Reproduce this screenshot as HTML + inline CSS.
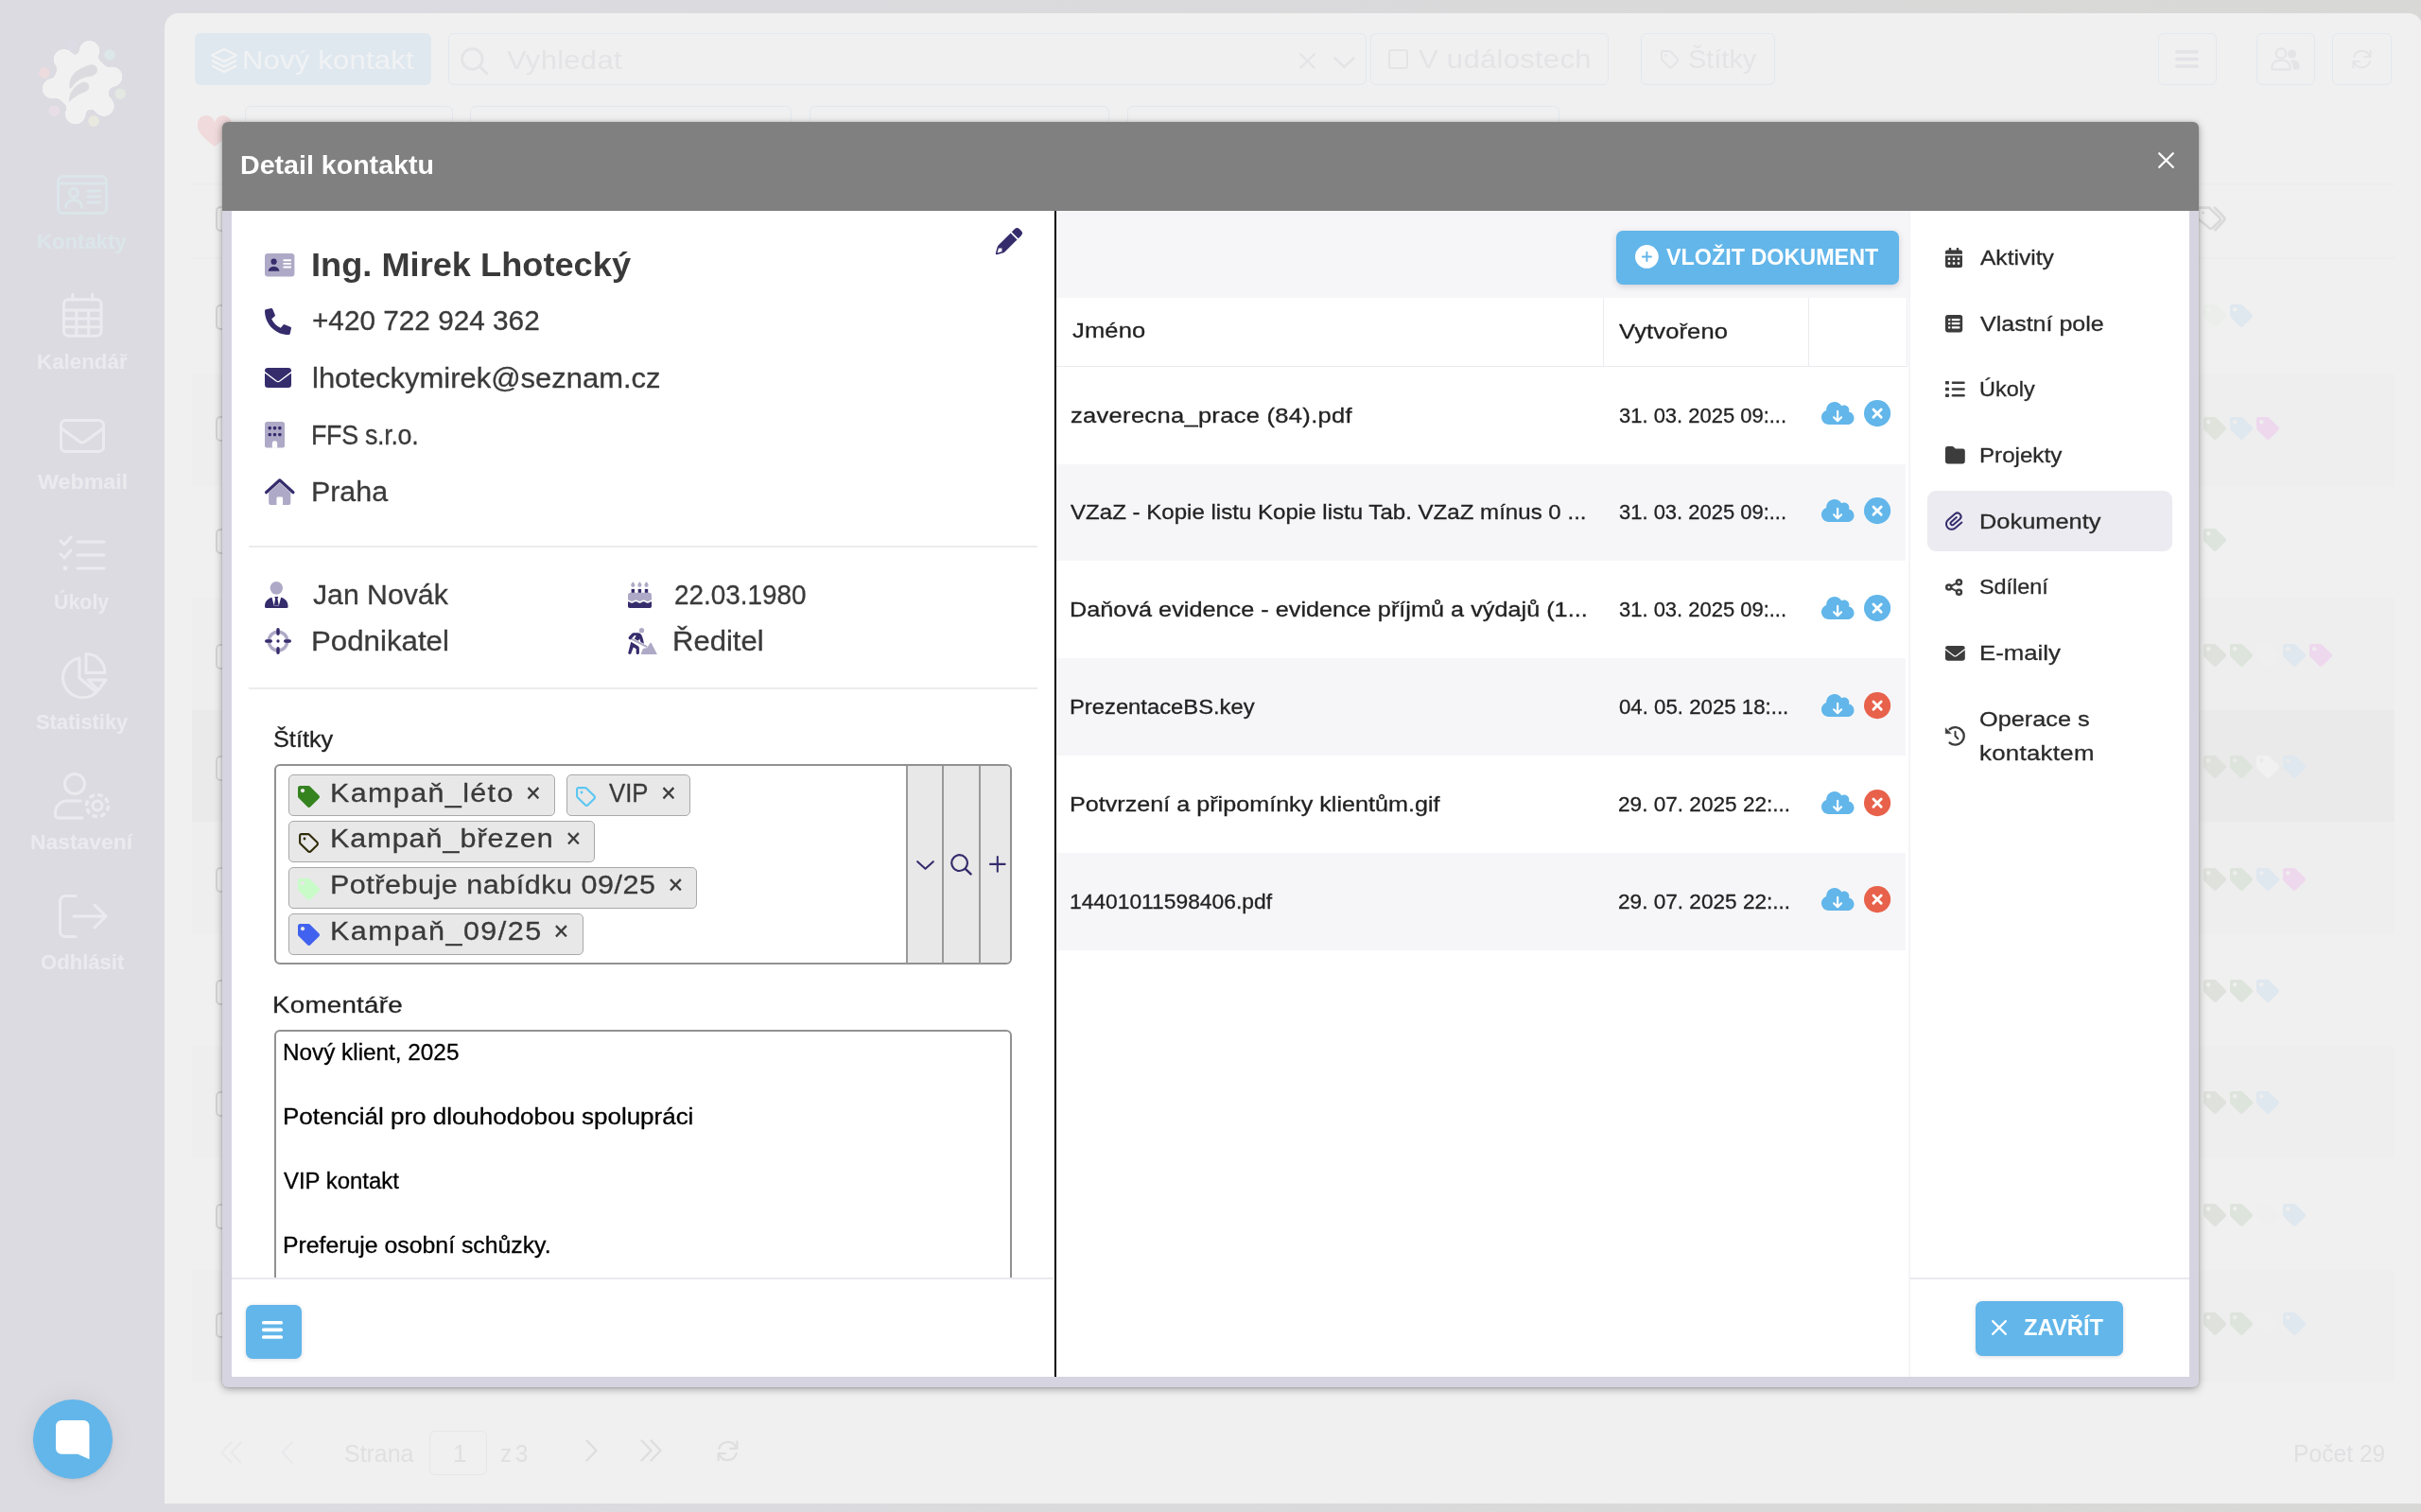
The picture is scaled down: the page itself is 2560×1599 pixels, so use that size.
<!DOCTYPE html>
<html lang="cs"><head><meta charset="utf-8"><title>Detail kontaktu</title>
<style>
html,body{margin:0;padding:0}
body{width:2560px;height:1599px;position:relative;overflow:hidden;background:linear-gradient(90deg,#dcdbe2 0%,#dcdbe2 8%,#dadadc 50%,#d8d8d6 100%);font-family:"Liberation Sans", sans-serif;color:#3a3a3a}
.b,.t,.i{position:absolute;box-sizing:border-box}
.t{white-space:pre;transform-origin:0 0}
.i{display:block;overflow:visible}
#w{position:absolute;left:0;top:0;width:2560px;height:1599px;will-change:transform}
</style></head>
<body>
<div id="w">
<!-- dimmed application behind the dialog -->
<div class="b" style="left:174px;top:14px;width:2387px;height:1576px;background:#f0f0f0;border-radius:15px 14px 0 0;"></div>
<div class="b" style="left:205.7px;top:34.7px;width:250.3px;height:55.5px;background:#e0e8ef;border-radius:6px;"></div>
<div class="b" style="left:473.8px;top:34.7px;width:971.2px;height:55.5px;border-radius:6px;border:1.5px solid #e3e8ee;"></div>
<div class="b" style="left:1449.3px;top:34.7px;width:251.3px;height:55.5px;border-radius:6px;border:1.5px solid #e3e8ee;"></div>
<div class="b" style="left:1735px;top:34.7px;width:141.8px;height:55.5px;border-radius:6px;border:1.5px solid #e3e8ee;"></div>
<div class="b" style="left:2281.6px;top:34.7px;width:62px;height:55.5px;border-radius:6px;border:1.5px solid #e3e8ee;"></div>
<div class="b" style="left:2385.8px;top:34.7px;width:62.5px;height:55.5px;border-radius:6px;border:1.5px solid #e3e8ee;"></div>
<div class="b" style="left:2466.2px;top:34.7px;width:62.5px;height:55.5px;border-radius:6px;border:1.5px solid #e3e8ee;"></div>
<div class="b" style="left:259px;top:111.5px;width:219.8px;height:40px;border-radius:6px 6px 0 0;border:1.5px solid #e3e8ee;"></div>
<div class="b" style="left:497px;top:111.5px;width:339.7px;height:40px;border-radius:6px 6px 0 0;border:1.5px solid #e3e8ee;"></div>
<div class="b" style="left:855.5px;top:111.5px;width:317.2px;height:40px;border-radius:6px 6px 0 0;border:1.5px solid #e3e8ee;"></div>
<div class="b" style="left:1192px;top:111.5px;width:456.5px;height:40px;border-radius:6px 6px 0 0;border:1.5px solid #e3e8ee;"></div>
<div class="b" style="left:1468.4px;top:52.2px;width:21px;height:21px;border-radius:3px;border:2px solid #e4e4e7;"></div>
<div class="b" style="left:453.5px;top:1512.8px;width:61.5px;height:46.8px;border-radius:6px;border:1.5px solid #e6e6e8;"></div>
<div class="b" style="left:34.7px;top:1480.4px;width:84px;height:84px;background:#62b6ea;border-radius:42px;box-shadow:0 0 22px 6px rgba(0,0,0,.045),0 2px 5px rgba(0,0,0,.10);"></div>
<div class="b" style="left:203px;top:395.4px;width:2329px;height:118.4px;background:#eeeeee;"></div>
<div class="b" style="left:203px;top:632.2px;width:2329px;height:118.4px;background:#eeeeee;"></div>
<div class="b" style="left:203px;top:869.0px;width:2329px;height:118.4px;background:#eeeeee;"></div>
<div class="b" style="left:203px;top:1105.8000000000002px;width:2329px;height:118.4px;background:#eeeeee;"></div>
<div class="b" style="left:203px;top:1342.6000000000001px;width:2329px;height:118.4px;background:#eeeeee;"></div>
<div class="b" style="left:203px;top:750.6px;width:2329px;height:118.4px;background:#eaeaea;"></div>
<div class="b" style="left:203px;top:194px;width:2329px;height:2px;background:#ededed;"></div>
<div class="b" style="left:203px;top:272px;width:2329px;height:2px;background:#ededed;"></div>
<div class="b" style="left:227.6px;top:218.0px;width:21px;height:27px;background:#f1f1f1;border-radius:5px;border:2px solid #d4d4d4;"></div>
<div class="b" style="left:227.6px;top:321.5px;width:21px;height:27px;background:#f1f1f1;border-radius:5px;border:2px solid #d4d4d4;"></div>
<div class="b" style="left:227.6px;top:440.0px;width:21px;height:27px;background:#f1f1f1;border-radius:5px;border:2px solid #d4d4d4;"></div>
<div class="b" style="left:227.6px;top:558.5px;width:21px;height:27px;background:#f1f1f1;border-radius:5px;border:2px solid #d4d4d4;"></div>
<div class="b" style="left:227.6px;top:680.5px;width:21px;height:27px;background:#f1f1f1;border-radius:5px;border:2px solid #d4d4d4;"></div>
<div class="b" style="left:227.6px;top:798.5px;width:21px;height:27px;background:#f1f1f1;border-radius:5px;border:2px solid #d4d4d4;"></div>
<div class="b" style="left:227.6px;top:917.0px;width:21px;height:27px;background:#f1f1f1;border-radius:5px;border:2px solid #d4d4d4;"></div>
<div class="b" style="left:227.6px;top:1035.5px;width:21px;height:27px;background:#f1f1f1;border-radius:5px;border:2px solid #d4d4d4;"></div>
<div class="b" style="left:227.6px;top:1153.5px;width:21px;height:27px;background:#f1f1f1;border-radius:5px;border:2px solid #d4d4d4;"></div>
<div class="b" style="left:227.6px;top:1272.5px;width:21px;height:27px;background:#f1f1f1;border-radius:5px;border:2px solid #d4d4d4;"></div>
<div class="b" style="left:227.6px;top:1387.5px;width:21px;height:27px;background:#f1f1f1;border-radius:5px;border:2px solid #d4d4d4;"></div>
<svg class="i" style="left:20px;top:20px;" width="140" height="140" viewBox="0 0 140 140" preserveAspectRatio="xMidYMid meet"><defs><filter id="goo" x="-10%" y="-10%" width="120%" height="120%" color-interpolation-filters="sRGB"><feGaussianBlur in="SourceGraphic" stdDeviation="2.6" result="b"/><feColorMatrix in="b" mode="matrix" values="1 0 0 0 0  0 1 0 0 0  0 0 1 0 0  0 0 0 16 -7"/></filter></defs><circle cx="55.1" cy="27.8" r="5.8" fill="#dddce5"/><circle cx="96.1" cy="38.0" r="5.8" fill="#dce7ea"/><circle cx="26.9" cy="56.9" r="5.8" fill="#ecdcde"/><circle cx="107.2" cy="79.2" r="5.8" fill="#e3e8e2"/><circle cx="37.3" cy="97.2" r="5.8" fill="#e8dfe6"/><circle cx="79.0" cy="108.1" r="5.8" fill="#e9e9df"/><g filter="url(#goo)"><circle cx="67.1" cy="67.1" r="29.6" fill="#f1f1f1"/><circle cx="74.5" cy="33.7" r="10.8" fill="#f1f1f1"/><circle cx="72.6" cy="42.5" r="10.2" fill="#f1f1f1"/><circle cx="98.6" cy="61.2" r="10.8" fill="#f1f1f1"/><circle cx="89.8" cy="62.9" r="10.2" fill="#f1f1f1"/><circle cx="89.9" cy="92.0" r="10.8" fill="#f1f1f1"/><circle cx="83.9" cy="85.4" r="10.2" fill="#f1f1f1"/><circle cx="59.7" cy="100.6" r="10.8" fill="#f1f1f1"/><circle cx="61.7" cy="91.8" r="10.2" fill="#f1f1f1"/><circle cx="35.6" cy="73.7" r="10.8" fill="#f1f1f1"/><circle cx="44.4" cy="71.9" r="10.2" fill="#f1f1f1"/><circle cx="47.5" cy="42.7" r="10.8" fill="#f1f1f1"/><circle cx="53.1" cy="49.7" r="10.2" fill="#f1f1f1"/></g><path d="M54.17 73.61C52.85 73.46 53.32 67.67 54.17 64.81C55.02 61.96 56.87 58.80 59.26 56.48C61.65 54.17 65.59 52.31 68.52 50.93C71.45 49.54 74.61 48.23 76.85 48.15C79.09 48.07 80.97 49.23 81.94 50.46C82.92 51.70 83.23 53.97 82.69 55.56C82.15 57.15 80.76 58.95 78.70 60.00C76.65 61.05 73.15 60.90 70.37 61.85C67.59 62.81 64.74 63.78 62.04 65.74C59.34 67.70 55.48 73.77 54.17 73.61z" fill="#dcdce0"/><path d="M52.96 87.50C52.50 86.65 53.43 81.40 54.63 78.70C55.83 76.00 57.95 73.27 60.19 71.30C62.42 69.32 65.90 67.31 68.06 66.85C70.22 66.39 72.15 67.47 73.15 68.52C74.15 69.57 74.46 71.79 74.07 73.15C73.69 74.51 72.53 75.59 70.83 76.67C69.14 77.75 66.13 78.44 63.89 79.63C61.65 80.82 59.23 82.48 57.41 83.80C55.59 85.11 53.43 88.35 52.96 87.50z" fill="#dcdce0"/></svg>
<svg class="i" style="left:60px;top:185px;" width="54" height="42" viewBox="0 0 54 42" preserveAspectRatio="xMidYMid meet"><rect x="1.500" y="1.500" width="51" height="39" rx="5" stroke="#dbe6ea" stroke-width="3" fill="none" stroke-linecap="round" stroke-linejoin="round"/><path d="M1.500 9H52.500" stroke="#dbe6ea" stroke-width="3" fill="none" stroke-linecap="round" stroke-linejoin="round"/><circle cx="18" cy="19" r="4.500" stroke="#dbe6ea" stroke-width="3" fill="none" stroke-linecap="round" stroke-linejoin="round"/><path d="M9.500 34a8.500 7.500 0 0 1 17 0M33 17H46M33 23H46M33 29H46" stroke="#dbe6ea" stroke-width="3" fill="none" stroke-linecap="round" stroke-linejoin="round"/></svg>
<svg class="i" style="left:66px;top:310px;" width="42.5" height="47" viewBox="0 0 43 47" preserveAspectRatio="xMidYMid meet"><rect x="1.500" y="6.500" width="40" height="39" rx="5" stroke="#ebebef" stroke-width="3" fill="none" stroke-linecap="round" stroke-linejoin="round"/><path d="M11 1V7M32 1V7M1.500 18H41.500M1.500 27H41.500M1.500 36H41.500M15 18V45M28 18V45" stroke="#ebebef" stroke-width="3" fill="none" stroke-linecap="round" stroke-linejoin="round"/></svg>
<svg class="i" style="left:63px;top:442.6px;" width="48" height="36" viewBox="0 0 48 36" preserveAspectRatio="xMidYMid meet"><rect x="1.500" y="1.500" width="45" height="33" rx="5" stroke="#ebebef" stroke-width="3" fill="none" stroke-linecap="round" stroke-linejoin="round"/><path d="M2 10L21 24a5 5 0 0 0 6 0L46 10" stroke="#ebebef" stroke-width="3" fill="none" stroke-linecap="round" stroke-linejoin="round"/></svg>
<svg class="i" style="left:62px;top:567px;" width="50" height="40" viewBox="0 0 50 40" preserveAspectRatio="xMidYMid meet"><path d="M2 5L6 9L13 1M2 19L6 23L13 15M20 6H48M20 20H48M20 34H48" stroke="#ebebef" stroke-width="3" fill="none" stroke-linecap="round" stroke-linejoin="round"/><circle cx="7" cy="34" r="2.400" fill="#ebebef"/></svg>
<svg class="i" style="left:62px;top:690px;" width="52" height="50" viewBox="0 0 52 50" preserveAspectRatio="xMidYMid meet"><path d="M22 6A21 21 0 1 0 40 42L22 27z" stroke="#ebebef" stroke-width="3" fill="none" stroke-linecap="round" stroke-linejoin="round"/><path d="M29 1.500A20 20 0 0 1 49 21.500H29z" stroke="#ebebef" stroke-width="3" fill="none" stroke-linecap="round" stroke-linejoin="round"/><path d="M31 29H50L42 40z" stroke="#ebebef" stroke-width="3" fill="none" stroke-linecap="round" stroke-linejoin="round"/></svg>
<svg class="i" style="left:57px;top:817px;" width="62" height="50" viewBox="0 0 62 50" preserveAspectRatio="xMidYMid meet"><circle cx="22" cy="12" r="10.500" stroke="#ebebef" stroke-width="3" fill="none" stroke-linecap="round" stroke-linejoin="round"/><path d="M28 30H14A12.500 12.500 0 0 0 1.500 42.500V45a3 3 0 0 0 3 3H30" stroke="#ebebef" stroke-width="3" fill="none" stroke-linecap="round" stroke-linejoin="round"/><circle cx="46" cy="35" r="5" stroke="#ebebef" stroke-width="3" fill="none" stroke-linecap="round" stroke-linejoin="round"/><circle cx="46" cy="35" r="11.500" stroke="#ebebef" stroke-width="3.400" stroke-dasharray="5.600 3.400" fill="none"/></svg>
<svg class="i" style="left:62px;top:946px;" width="52" height="46" viewBox="0 0 52 46" preserveAspectRatio="xMidYMid meet"><path d="M18 1.500H7A5.500 5.500 0 0 0 1.500 7V39A5.500 5.500 0 0 0 7 44.500H18M16 23H50M38 11L50 23L38 35" stroke="#ebebef" stroke-width="3" fill="none" stroke-linecap="round" stroke-linejoin="round"/></svg>
<svg class="i" style="left:58.7px;top:1501.5px;" width="35.5" height="41.8" viewBox="0 0 36 42" preserveAspectRatio="none"><path d="M6 0H30a6 6 0 0 1 6 6V41.500L23.500 36H6a6 6 0 0 1-6-6V6a6 6 0 0 1 6-6z" fill="#ffffff"/></svg>
<svg class="i" style="left:208.7px;top:124px;" width="36" height="31" viewBox="0 0 36 31" preserveAspectRatio="xMidYMid meet"><path d="M18 31C5 21 0 15 0 9A9 9 0 0 1 18 5.500A9 9 0 0 1 36 9C36 15 31 21 18 31z" fill="#f0dadb"/></svg>
<svg class="i" style="left:487px;top:50px;" width="29" height="29" viewBox="0 0 22.6 22.4" preserveAspectRatio="xMidYMid meet"><circle cx="9.6" cy="9.6" r="8.4" stroke="#e4e4e7" stroke-width="2.2" fill="none"/><path d="M15.8 15.8L21.6 21.4" stroke="#e4e4e7" stroke-width="2.4" stroke-linecap="round"/></svg>
<svg class="i" style="left:222px;top:49px;" width="30" height="28" viewBox="0 0 30 28" preserveAspectRatio="xMidYMid meet"><path d="M15 3L28 9.500L15 16L2 9.500zM2 15L15 21.500L28 15M2 20.500L15 27L28 20.500" stroke="#f3f3f3" stroke-width="2.200" fill="none" stroke-linejoin="round"/></svg>
<svg class="i" style="left:1374.2px;top:56px;" width="17" height="17" viewBox="0 0 17 17" preserveAspectRatio="xMidYMid meet"><path d="M1.2 1.2L15.8 15.8M15.8 1.2L1.2 15.8" stroke="#e4e4e7" stroke-width="2.3" stroke-linecap="round" fill="none"/></svg>
<svg class="i" style="left:1410px;top:59.7px;" width="23" height="12.4" viewBox="0 0 19 10.2" preserveAspectRatio="none"><path d="M1.2 1.2L9.5 8.8L17.8 1.2" stroke="#e4e4e7" stroke-width="2.1" stroke-linecap="round" stroke-linejoin="round" fill="none"/></svg>
<svg class="i" style="left:1754.6px;top:52px;" width="21.5" height="21.5" viewBox="0 0 24 24" preserveAspectRatio="xMidYMid meet"><path d="M2.2 11.3V3.9a1.7 1.7 0 0 1 1.700-1.700h7.400a2 2 0 0 1 1.400.600l8.500 8.500a2.100 2.100 0 0 1 0 3l-6.900 6.900a2.100 2.100 0 0 1-3 0l-8.500-8.500a2 2 0 0 1-.600-1.400z" stroke="#e4e4e7" stroke-width="2.2" stroke-linejoin="round" fill="none"/><circle cx="7.3" cy="7.3" r="1.5" fill="#e4e4e7"/></svg>
<svg class="i" style="left:2300px;top:53px;" width="25" height="19" viewBox="0 0 22 18.8" preserveAspectRatio="none"><rect x="0" y="0" width="22" height="3.6" rx="1.6" fill="#e4e4e7"/><rect x="0" y="7.6" width="22" height="3.6" rx="1.6" fill="#e4e4e7"/><rect x="0" y="15.2" width="22" height="3.6" rx="1.6" fill="#e4e4e7"/></svg>
<svg class="i" style="left:2486px;top:51px;" width="23" height="23" viewBox="0 0 24 24" preserveAspectRatio="xMidYMid meet"><path d="M3.200 9.500A9.200 9.200 0 0 1 20.600 8.600M20.800 14.500A9.200 9.200 0 0 1 3.400 15.400" stroke="#e4e4e7" stroke-width="2" fill="none" stroke-linecap="round"/><path d="M21.500 2.500V9.500H14.500M2.500 21.500V14.500H9.500" stroke="#e4e4e7" stroke-width="2" fill="none" stroke-linecap="round" stroke-linejoin="round"/></svg>
<svg class="i" style="left:2401px;top:50px;" width="32" height="25" viewBox="0 0 32 25" preserveAspectRatio="xMidYMid meet"><circle cx="11" cy="6.500" r="5.200" stroke="#e4e4e7" stroke-width="2.200" fill="none"/><path d="M1.500 23.500V21a7 7 0 0 1 7-7h5a7 7 0 0 1 7 7V23.500z" stroke="#e4e4e7" stroke-width="2.200" fill="none" stroke-linejoin="round"/><circle cx="22.500" cy="7" r="4.500" fill="#e4e4e7"/><path d="M22.500 13.500h2a6 6 0 0 1 6 6V23.500H23.500V20a9 9 0 0 0-3-6z" fill="#e4e4e7"/></svg>
<svg class="i" style="left:757px;top:1522px;" width="25" height="25" viewBox="0 0 24 24" preserveAspectRatio="xMidYMid meet"><path d="M3.200 9.500A9.200 9.200 0 0 1 20.600 8.600M20.800 14.500A9.200 9.200 0 0 1 3.400 15.400" stroke="#dedee0" stroke-width="2" fill="none" stroke-linecap="round"/><path d="M21.500 2.500V9.500H14.500M2.500 21.500V14.500H9.500" stroke="#dedee0" stroke-width="2" fill="none" stroke-linecap="round" stroke-linejoin="round"/></svg>
<svg class="i" style="left:233px;top:1524px;" width="13" height="24" viewBox="0 0 13 24" preserveAspectRatio="xMidYMid meet"><path d="M11.500 1.500L1.500 12L11.500 22.500" stroke="#e9e9eb" stroke-width="2.400" stroke-linecap="round" stroke-linejoin="round" fill="none"/></svg>
<svg class="i" style="left:243px;top:1524px;" width="13" height="24" viewBox="0 0 13 24" preserveAspectRatio="xMidYMid meet"><path d="M11.500 1.500L1.500 12L11.500 22.500" stroke="#e9e9eb" stroke-width="2.400" stroke-linecap="round" stroke-linejoin="round" fill="none"/></svg>
<svg class="i" style="left:297px;top:1524px;" width="13" height="24" viewBox="0 0 13 24" preserveAspectRatio="xMidYMid meet"><path d="M11.500 1.500L1.500 12L11.500 22.500" stroke="#e9e9eb" stroke-width="2.400" stroke-linecap="round" stroke-linejoin="round" fill="none"/></svg>
<svg class="i" style="left:2321.5px;top:217.5px;" width="30.5" height="29" viewBox="0 0 26 27" preserveAspectRatio="none"><path d="M1.500 12V3.500a2 2 0 0 1 2-2H12L21.500 11.500a2 2 0 0 1 0 3L15 21.500a2 2 0 0 1-3 0z" stroke="#d9d9d9" stroke-width="2.400" fill="none" stroke-linejoin="round"/><path d="M17 1.500L25 10.500a3 3 0 0 1 0 4L17.500 23.500" stroke="#d9d9d9" stroke-width="2.400" fill="none" stroke-linecap="round"/><circle cx="6.500" cy="6.500" r="1.300" fill="#d9d9d9"/></svg>
<svg class="i" style="left:619px;top:1522px;" width="13" height="24" viewBox="0 0 13 24" preserveAspectRatio="xMidYMid meet"><path d="M1.500 1.500L11.500 12L1.500 22.500" stroke="#dedee0" stroke-width="2.400" stroke-linecap="round" stroke-linejoin="round" fill="none"/></svg>
<svg class="i" style="left:677px;top:1522px;" width="13" height="24" viewBox="0 0 13 24" preserveAspectRatio="xMidYMid meet"><path d="M1.500 1.500L11.500 12L1.500 22.500" stroke="#dedee0" stroke-width="2.400" stroke-linecap="round" stroke-linejoin="round" fill="none"/></svg>
<svg class="i" style="left:687px;top:1522px;" width="13" height="24" viewBox="0 0 13 24" preserveAspectRatio="xMidYMid meet"><path d="M1.500 1.500L11.500 12L1.500 22.500" stroke="#dedee0" stroke-width="2.400" stroke-linecap="round" stroke-linejoin="round" fill="none"/></svg>
<svg class="i" style="left:2330px;top:322px;" width="24" height="24" viewBox="0 0 512 512" preserveAspectRatio="xMidYMid meet"><path fill="#ebeeea" d="M0 252.118V48C0 21.490 21.490 0 48 0h204.118a48 48 0 0 1 33.941 14.059l211.882 211.882c18.745 18.745 18.745 49.137 0 67.882L293.823 497.941c-18.745 18.745-49.137 18.745-67.882 0L14.059 286.059A48 48 0 0 1 0 252.118zM112 64c-26.510 0-48 21.490-48 48s21.490 48 48 48 48-21.490 48-48-21.490-48-48-48z"/></svg>
<svg class="i" style="left:2358px;top:322px;" width="24" height="24" viewBox="0 0 512 512" preserveAspectRatio="xMidYMid meet"><path fill="#dfe7ef" d="M0 252.118V48C0 21.490 21.490 0 48 0h204.118a48 48 0 0 1 33.941 14.059l211.882 211.882c18.745 18.745 18.745 49.137 0 67.882L293.823 497.941c-18.745 18.745-49.137 18.745-67.882 0L14.059 286.059A48 48 0 0 1 0 252.118zM112 64c-26.510 0-48 21.490-48 48s21.490 48 48 48 48-21.490 48-48-21.490-48-48-48z"/></svg>
<svg class="i" style="left:2330px;top:440.6px;" width="24" height="24" viewBox="0 0 512 512" preserveAspectRatio="xMidYMid meet"><path fill="#dfe3dc" d="M0 252.118V48C0 21.490 21.490 0 48 0h204.118a48 48 0 0 1 33.941 14.059l211.882 211.882c18.745 18.745 18.745 49.137 0 67.882L293.823 497.941c-18.745 18.745-49.137 18.745-67.882 0L14.059 286.059A48 48 0 0 1 0 252.118zM112 64c-26.510 0-48 21.490-48 48s21.490 48 48 48 48-21.490 48-48-21.490-48-48-48z"/></svg>
<svg class="i" style="left:2358px;top:440.6px;" width="24" height="24" viewBox="0 0 512 512" preserveAspectRatio="xMidYMid meet"><path fill="#dfe7ef" d="M0 252.118V48C0 21.490 21.490 0 48 0h204.118a48 48 0 0 1 33.941 14.059l211.882 211.882c18.745 18.745 18.745 49.137 0 67.882L293.823 497.941c-18.745 18.745-49.137 18.745-67.882 0L14.059 286.059A48 48 0 0 1 0 252.118zM112 64c-26.510 0-48 21.490-48 48s21.490 48 48 48 48-21.490 48-48-21.490-48-48-48z"/></svg>
<svg class="i" style="left:2386px;top:440.6px;" width="24" height="24" viewBox="0 0 512 512" preserveAspectRatio="xMidYMid meet"><path fill="#eed8ee" d="M0 252.118V48C0 21.490 21.490 0 48 0h204.118a48 48 0 0 1 33.941 14.059l211.882 211.882c18.745 18.745 18.745 49.137 0 67.882L293.823 497.941c-18.745 18.745-49.137 18.745-67.882 0L14.059 286.059A48 48 0 0 1 0 252.118zM112 64c-26.510 0-48 21.490-48 48s21.490 48 48 48 48-21.490 48-48-21.490-48-48-48z"/></svg>
<svg class="i" style="left:2330px;top:559px;" width="24" height="24" viewBox="0 0 512 512" preserveAspectRatio="xMidYMid meet"><path fill="#dde3dd" d="M0 252.118V48C0 21.490 21.490 0 48 0h204.118a48 48 0 0 1 33.941 14.059l211.882 211.882c18.745 18.745 18.745 49.137 0 67.882L293.823 497.941c-18.745 18.745-49.137 18.745-67.882 0L14.059 286.059A48 48 0 0 1 0 252.118zM112 64c-26.510 0-48 21.490-48 48s21.490 48 48 48 48-21.490 48-48-21.490-48-48-48z"/></svg>
<svg class="i" style="left:2330px;top:680.6px;" width="24" height="24" viewBox="0 0 512 512" preserveAspectRatio="xMidYMid meet"><path fill="#dfe1dc" d="M0 252.118V48C0 21.490 21.490 0 48 0h204.118a48 48 0 0 1 33.941 14.059l211.882 211.882c18.745 18.745 18.745 49.137 0 67.882L293.823 497.941c-18.745 18.745-49.137 18.745-67.882 0L14.059 286.059A48 48 0 0 1 0 252.118zM112 64c-26.510 0-48 21.490-48 48s21.490 48 48 48 48-21.490 48-48-21.490-48-48-48z"/></svg>
<svg class="i" style="left:2358px;top:680.6px;" width="24" height="24" viewBox="0 0 512 512" preserveAspectRatio="xMidYMid meet"><path fill="#dde4dc" d="M0 252.118V48C0 21.490 21.490 0 48 0h204.118a48 48 0 0 1 33.941 14.059l211.882 211.882c18.745 18.745 18.745 49.137 0 67.882L293.823 497.941c-18.745 18.745-49.137 18.745-67.882 0L14.059 286.059A48 48 0 0 1 0 252.118zM112 64c-26.510 0-48 21.490-48 48s21.490 48 48 48 48-21.490 48-48-21.490-48-48-48z"/></svg>
<svg class="i" style="left:2386px;top:680.6px;" width="24" height="24" viewBox="0 0 512 512" preserveAspectRatio="xMidYMid meet"><path fill="#eeefee" d="M0 252.118V48C0 21.490 21.490 0 48 0h204.118a48 48 0 0 1 33.941 14.059l211.882 211.882c18.745 18.745 18.745 49.137 0 67.882L293.823 497.941c-18.745 18.745-49.137 18.745-67.882 0L14.059 286.059A48 48 0 0 1 0 252.118zM112 64c-26.510 0-48 21.490-48 48s21.490 48 48 48 48-21.490 48-48-21.490-48-48-48z"/></svg>
<svg class="i" style="left:2414px;top:680.6px;" width="24" height="24" viewBox="0 0 512 512" preserveAspectRatio="xMidYMid meet"><path fill="#dfe7ef" d="M0 252.118V48C0 21.490 21.490 0 48 0h204.118a48 48 0 0 1 33.941 14.059l211.882 211.882c18.745 18.745 18.745 49.137 0 67.882L293.823 497.941c-18.745 18.745-49.137 18.745-67.882 0L14.059 286.059A48 48 0 0 1 0 252.118zM112 64c-26.510 0-48 21.490-48 48s21.490 48 48 48 48-21.490 48-48-21.490-48-48-48z"/></svg>
<svg class="i" style="left:2442px;top:680.6px;" width="24" height="24" viewBox="0 0 512 512" preserveAspectRatio="xMidYMid meet"><path fill="#eed8ee" d="M0 252.118V48C0 21.490 21.490 0 48 0h204.118a48 48 0 0 1 33.941 14.059l211.882 211.882c18.745 18.745 18.745 49.137 0 67.882L293.823 497.941c-18.745 18.745-49.137 18.745-67.882 0L14.059 286.059A48 48 0 0 1 0 252.118zM112 64c-26.510 0-48 21.490-48 48s21.490 48 48 48 48-21.490 48-48-21.490-48-48-48z"/></svg>
<svg class="i" style="left:2330px;top:799px;" width="24" height="24" viewBox="0 0 512 512" preserveAspectRatio="xMidYMid meet"><path fill="#dfe1dc" d="M0 252.118V48C0 21.490 21.490 0 48 0h204.118a48 48 0 0 1 33.941 14.059l211.882 211.882c18.745 18.745 18.745 49.137 0 67.882L293.823 497.941c-18.745 18.745-49.137 18.745-67.882 0L14.059 286.059A48 48 0 0 1 0 252.118zM112 64c-26.510 0-48 21.490-48 48s21.490 48 48 48 48-21.490 48-48-21.490-48-48-48z"/></svg>
<svg class="i" style="left:2358px;top:799px;" width="24" height="24" viewBox="0 0 512 512" preserveAspectRatio="xMidYMid meet"><path fill="#dde4dc" d="M0 252.118V48C0 21.490 21.490 0 48 0h204.118a48 48 0 0 1 33.941 14.059l211.882 211.882c18.745 18.745 18.745 49.137 0 67.882L293.823 497.941c-18.745 18.745-49.137 18.745-67.882 0L14.059 286.059A48 48 0 0 1 0 252.118zM112 64c-26.510 0-48 21.490-48 48s21.490 48 48 48 48-21.490 48-48-21.490-48-48-48z"/></svg>
<svg class="i" style="left:2386px;top:799px;" width="24" height="24" viewBox="0 0 512 512" preserveAspectRatio="xMidYMid meet"><path fill="#f0f1f0" d="M0 252.118V48C0 21.490 21.490 0 48 0h204.118a48 48 0 0 1 33.941 14.059l211.882 211.882c18.745 18.745 18.745 49.137 0 67.882L293.823 497.941c-18.745 18.745-49.137 18.745-67.882 0L14.059 286.059A48 48 0 0 1 0 252.118zM112 64c-26.510 0-48 21.490-48 48s21.490 48 48 48 48-21.490 48-48-21.490-48-48-48z"/></svg>
<svg class="i" style="left:2414px;top:799px;" width="24" height="24" viewBox="0 0 512 512" preserveAspectRatio="xMidYMid meet"><path fill="#dfe7ef" d="M0 252.118V48C0 21.490 21.490 0 48 0h204.118a48 48 0 0 1 33.941 14.059l211.882 211.882c18.745 18.745 18.745 49.137 0 67.882L293.823 497.941c-18.745 18.745-49.137 18.745-67.882 0L14.059 286.059A48 48 0 0 1 0 252.118zM112 64c-26.510 0-48 21.490-48 48s21.490 48 48 48 48-21.490 48-48-21.490-48-48-48z"/></svg>
<svg class="i" style="left:2330px;top:917.5px;" width="24" height="24" viewBox="0 0 512 512" preserveAspectRatio="xMidYMid meet"><path fill="#dfe1dc" d="M0 252.118V48C0 21.490 21.490 0 48 0h204.118a48 48 0 0 1 33.941 14.059l211.882 211.882c18.745 18.745 18.745 49.137 0 67.882L293.823 497.941c-18.745 18.745-49.137 18.745-67.882 0L14.059 286.059A48 48 0 0 1 0 252.118zM112 64c-26.510 0-48 21.490-48 48s21.490 48 48 48 48-21.490 48-48-21.490-48-48-48z"/></svg>
<svg class="i" style="left:2358px;top:917.5px;" width="24" height="24" viewBox="0 0 512 512" preserveAspectRatio="xMidYMid meet"><path fill="#dde4dc" d="M0 252.118V48C0 21.490 21.490 0 48 0h204.118a48 48 0 0 1 33.941 14.059l211.882 211.882c18.745 18.745 18.745 49.137 0 67.882L293.823 497.941c-18.745 18.745-49.137 18.745-67.882 0L14.059 286.059A48 48 0 0 1 0 252.118zM112 64c-26.510 0-48 21.490-48 48s21.490 48 48 48 48-21.490 48-48-21.490-48-48-48z"/></svg>
<svg class="i" style="left:2386px;top:917.5px;" width="24" height="24" viewBox="0 0 512 512" preserveAspectRatio="xMidYMid meet"><path fill="#dfe7ef" d="M0 252.118V48C0 21.490 21.490 0 48 0h204.118a48 48 0 0 1 33.941 14.059l211.882 211.882c18.745 18.745 18.745 49.137 0 67.882L293.823 497.941c-18.745 18.745-49.137 18.745-67.882 0L14.059 286.059A48 48 0 0 1 0 252.118zM112 64c-26.510 0-48 21.490-48 48s21.490 48 48 48 48-21.490 48-48-21.490-48-48-48z"/></svg>
<svg class="i" style="left:2414px;top:917.5px;" width="24" height="24" viewBox="0 0 512 512" preserveAspectRatio="xMidYMid meet"><path fill="#eed8ee" d="M0 252.118V48C0 21.490 21.490 0 48 0h204.118a48 48 0 0 1 33.941 14.059l211.882 211.882c18.745 18.745 18.745 49.137 0 67.882L293.823 497.941c-18.745 18.745-49.137 18.745-67.882 0L14.059 286.059A48 48 0 0 1 0 252.118zM112 64c-26.510 0-48 21.490-48 48s21.490 48 48 48 48-21.490 48-48-21.490-48-48-48z"/></svg>
<svg class="i" style="left:2330px;top:1036px;" width="24" height="24" viewBox="0 0 512 512" preserveAspectRatio="xMidYMid meet"><path fill="#dfe1dc" d="M0 252.118V48C0 21.490 21.490 0 48 0h204.118a48 48 0 0 1 33.941 14.059l211.882 211.882c18.745 18.745 18.745 49.137 0 67.882L293.823 497.941c-18.745 18.745-49.137 18.745-67.882 0L14.059 286.059A48 48 0 0 1 0 252.118zM112 64c-26.510 0-48 21.490-48 48s21.490 48 48 48 48-21.490 48-48-21.490-48-48-48z"/></svg>
<svg class="i" style="left:2358px;top:1036px;" width="24" height="24" viewBox="0 0 512 512" preserveAspectRatio="xMidYMid meet"><path fill="#dde4dc" d="M0 252.118V48C0 21.490 21.490 0 48 0h204.118a48 48 0 0 1 33.941 14.059l211.882 211.882c18.745 18.745 18.745 49.137 0 67.882L293.823 497.941c-18.745 18.745-49.137 18.745-67.882 0L14.059 286.059A48 48 0 0 1 0 252.118zM112 64c-26.510 0-48 21.490-48 48s21.490 48 48 48 48-21.490 48-48-21.490-48-48-48z"/></svg>
<svg class="i" style="left:2386px;top:1036px;" width="24" height="24" viewBox="0 0 512 512" preserveAspectRatio="xMidYMid meet"><path fill="#dfe7ef" d="M0 252.118V48C0 21.490 21.490 0 48 0h204.118a48 48 0 0 1 33.941 14.059l211.882 211.882c18.745 18.745 18.745 49.137 0 67.882L293.823 497.941c-18.745 18.745-49.137 18.745-67.882 0L14.059 286.059A48 48 0 0 1 0 252.118zM112 64c-26.510 0-48 21.490-48 48s21.490 48 48 48 48-21.490 48-48-21.490-48-48-48z"/></svg>
<svg class="i" style="left:2330px;top:1154px;" width="24" height="24" viewBox="0 0 512 512" preserveAspectRatio="xMidYMid meet"><path fill="#dfe1dc" d="M0 252.118V48C0 21.490 21.490 0 48 0h204.118a48 48 0 0 1 33.941 14.059l211.882 211.882c18.745 18.745 18.745 49.137 0 67.882L293.823 497.941c-18.745 18.745-49.137 18.745-67.882 0L14.059 286.059A48 48 0 0 1 0 252.118zM112 64c-26.510 0-48 21.490-48 48s21.490 48 48 48 48-21.490 48-48-21.490-48-48-48z"/></svg>
<svg class="i" style="left:2358px;top:1154px;" width="24" height="24" viewBox="0 0 512 512" preserveAspectRatio="xMidYMid meet"><path fill="#dde4dc" d="M0 252.118V48C0 21.490 21.490 0 48 0h204.118a48 48 0 0 1 33.941 14.059l211.882 211.882c18.745 18.745 18.745 49.137 0 67.882L293.823 497.941c-18.745 18.745-49.137 18.745-67.882 0L14.059 286.059A48 48 0 0 1 0 252.118zM112 64c-26.510 0-48 21.490-48 48s21.490 48 48 48 48-21.490 48-48-21.490-48-48-48z"/></svg>
<svg class="i" style="left:2386px;top:1154px;" width="24" height="24" viewBox="0 0 512 512" preserveAspectRatio="xMidYMid meet"><path fill="#dfe7ef" d="M0 252.118V48C0 21.490 21.490 0 48 0h204.118a48 48 0 0 1 33.941 14.059l211.882 211.882c18.745 18.745 18.745 49.137 0 67.882L293.823 497.941c-18.745 18.745-49.137 18.745-67.882 0L14.059 286.059A48 48 0 0 1 0 252.118zM112 64c-26.510 0-48 21.490-48 48s21.490 48 48 48 48-21.490 48-48-21.490-48-48-48z"/></svg>
<svg class="i" style="left:2330px;top:1273px;" width="24" height="24" viewBox="0 0 512 512" preserveAspectRatio="xMidYMid meet"><path fill="#dfe1dc" d="M0 252.118V48C0 21.490 21.490 0 48 0h204.118a48 48 0 0 1 33.941 14.059l211.882 211.882c18.745 18.745 18.745 49.137 0 67.882L293.823 497.941c-18.745 18.745-49.137 18.745-67.882 0L14.059 286.059A48 48 0 0 1 0 252.118zM112 64c-26.510 0-48 21.490-48 48s21.490 48 48 48 48-21.490 48-48-21.490-48-48-48z"/></svg>
<svg class="i" style="left:2358px;top:1273px;" width="24" height="24" viewBox="0 0 512 512" preserveAspectRatio="xMidYMid meet"><path fill="#dde4dc" d="M0 252.118V48C0 21.490 21.490 0 48 0h204.118a48 48 0 0 1 33.941 14.059l211.882 211.882c18.745 18.745 18.745 49.137 0 67.882L293.823 497.941c-18.745 18.745-49.137 18.745-67.882 0L14.059 286.059A48 48 0 0 1 0 252.118zM112 64c-26.510 0-48 21.490-48 48s21.490 48 48 48 48-21.490 48-48-21.490-48-48-48z"/></svg>
<svg class="i" style="left:2386px;top:1273px;" width="24" height="24" viewBox="0 0 512 512" preserveAspectRatio="xMidYMid meet"><path fill="#eeefee" d="M0 252.118V48C0 21.490 21.490 0 48 0h204.118a48 48 0 0 1 33.941 14.059l211.882 211.882c18.745 18.745 18.745 49.137 0 67.882L293.823 497.941c-18.745 18.745-49.137 18.745-67.882 0L14.059 286.059A48 48 0 0 1 0 252.118zM112 64c-26.510 0-48 21.490-48 48s21.490 48 48 48 48-21.490 48-48-21.490-48-48-48z"/></svg>
<svg class="i" style="left:2414px;top:1273px;" width="24" height="24" viewBox="0 0 512 512" preserveAspectRatio="xMidYMid meet"><path fill="#dfe7ef" d="M0 252.118V48C0 21.490 21.490 0 48 0h204.118a48 48 0 0 1 33.941 14.059l211.882 211.882c18.745 18.745 18.745 49.137 0 67.882L293.823 497.941c-18.745 18.745-49.137 18.745-67.882 0L14.059 286.059A48 48 0 0 1 0 252.118zM112 64c-26.510 0-48 21.490-48 48s21.490 48 48 48 48-21.490 48-48-21.490-48-48-48z"/></svg>
<svg class="i" style="left:2330px;top:1388px;" width="24" height="24" viewBox="0 0 512 512" preserveAspectRatio="xMidYMid meet"><path fill="#dfe1dc" d="M0 252.118V48C0 21.490 21.490 0 48 0h204.118a48 48 0 0 1 33.941 14.059l211.882 211.882c18.745 18.745 18.745 49.137 0 67.882L293.823 497.941c-18.745 18.745-49.137 18.745-67.882 0L14.059 286.059A48 48 0 0 1 0 252.118zM112 64c-26.510 0-48 21.490-48 48s21.490 48 48 48 48-21.490 48-48-21.490-48-48-48z"/></svg>
<svg class="i" style="left:2358px;top:1388px;" width="24" height="24" viewBox="0 0 512 512" preserveAspectRatio="xMidYMid meet"><path fill="#dde4dc" d="M0 252.118V48C0 21.490 21.490 0 48 0h204.118a48 48 0 0 1 33.941 14.059l211.882 211.882c18.745 18.745 18.745 49.137 0 67.882L293.823 497.941c-18.745 18.745-49.137 18.745-67.882 0L14.059 286.059A48 48 0 0 1 0 252.118zM112 64c-26.510 0-48 21.490-48 48s21.490 48 48 48 48-21.490 48-48-21.490-48-48-48z"/></svg>
<svg class="i" style="left:2386px;top:1388px;" width="24" height="24" viewBox="0 0 512 512" preserveAspectRatio="xMidYMid meet"><path fill="#eeefee" d="M0 252.118V48C0 21.490 21.490 0 48 0h204.118a48 48 0 0 1 33.941 14.059l211.882 211.882c18.745 18.745 18.745 49.137 0 67.882L293.823 497.941c-18.745 18.745-49.137 18.745-67.882 0L14.059 286.059A48 48 0 0 1 0 252.118zM112 64c-26.510 0-48 21.490-48 48s21.490 48 48 48 48-21.490 48-48-21.490-48-48-48z"/></svg>
<svg class="i" style="left:2414px;top:1388px;" width="24" height="24" viewBox="0 0 512 512" preserveAspectRatio="xMidYMid meet"><path fill="#dfe7ef" d="M0 252.118V48C0 21.490 21.490 0 48 0h204.118a48 48 0 0 1 33.941 14.059l211.882 211.882c18.745 18.745 18.745 49.137 0 67.882L293.823 497.941c-18.745 18.745-49.137 18.745-67.882 0L14.059 286.059A48 48 0 0 1 0 252.118zM112 64c-26.510 0-48 21.490-48 48s21.490 48 48 48 48-21.490 48-48-21.490-48-48-48z"/></svg>
<div class="t" style="left:255.7px;top:49.5px;font-size:27.5px;line-height:27.5px;letter-spacing:0.155px;transform:scaleX(1.1300);color:#f0f2f4;">Nový kontakt</div>
<div class="t" style="left:535.8px;top:49.5px;font-size:27.5px;line-height:27.5px;letter-spacing:0.229px;transform:scaleX(1.1300);color:#e4e4e7;">Vyhledat</div>
<div class="t" style="left:1499.9px;top:49.3px;font-size:27.5px;line-height:27.5px;letter-spacing:0.225px;transform:scaleX(1.1300);color:#e4e4e7;">V událostech</div>
<div class="t" style="left:1784.9px;top:49.3px;font-size:27.5px;line-height:27.5px;transform:scaleX(1.0513);color:#e4e4e7;">Štítky</div>
<div class="t" style="left:364.0px;top:1524.0px;font-size:26px;line-height:26px;transform:scaleX(0.9587);color:#e0e0e2;">Strana</div>
<div class="t" style="left:479.0px;top:1524.0px;font-size:26px;line-height:26px;color:#e0e0e2;">1</div>
<div class="t" style="left:529.1px;top:1524.0px;font-size:26px;line-height:26px;letter-spacing:-1.718px;transform:scaleX(0.9400);color:#e0e0e2;">z 3</div>
<div class="t" style="left:2425.1px;top:1524.0px;font-size:26px;line-height:26px;transform:scaleX(0.9484);color:#e0e0e2;">Počet 29</div>
<div class="t" style="left:38.6px;top:245.1px;font-size:22px;line-height:22px;transform:scaleX(1.0065);font-weight:700;color:#dbe6ea;">Kontakty</div>
<div class="t" style="left:38.6px;top:372.1px;font-size:22px;line-height:22px;transform:scaleX(1.0151);font-weight:700;color:#ebebef;">Kalendář</div>
<div class="t" style="left:40.0px;top:499.1px;font-size:22px;line-height:22px;transform:scaleX(1.0568);font-weight:700;color:#ebebef;">Webmail</div>
<div class="t" style="left:57.0px;top:626.1px;font-size:22px;line-height:22px;transform:scaleX(0.9720);font-weight:700;color:#ebebef;">Úkoly</div>
<div class="t" style="left:38.0px;top:753.1px;font-size:22px;line-height:22px;transform:scaleX(0.9941);font-weight:700;color:#ebebef;">Statistiky</div>
<div class="t" style="left:32.0px;top:880.1px;font-size:22px;line-height:22px;transform:scaleX(1.0402);font-weight:700;color:#ebebef;">Nastavení</div>
<div class="t" style="left:42.5px;top:1007.1px;font-size:22px;line-height:22px;transform:scaleX(1.0036);font-weight:700;color:#ebebef;">Odhlásit</div>
<!-- modal dialog -->
<div class="b" style="left:235px;top:129px;width:2090px;height:1337.5px;background:#d6d4e1;border-radius:6px;box-shadow:0 2px 9px rgba(0,0,0,.34),0 0 3px rgba(0,0,0,.15);"></div>
<div class="b" style="left:235px;top:129px;width:2090px;height:94px;background:#808080;border-radius:6px 6px 0 0;"></div>
<div class="b" style="left:245px;top:223px;width:2069.8px;height:1233px;background:#fff;"></div>
<div class="b" style="left:263px;top:576.5px;width:834px;height:2px;background:#ececef;"></div>
<div class="b" style="left:263px;top:727.3px;width:834px;height:2px;background:#ececef;"></div>
<div class="b" style="left:289.8px;top:807.9px;width:780.6px;height:212.3px;background:#fff;border-radius:6px;border:2px solid #919191;"></div>
<div class="b" style="left:958.7px;top:809.7px;width:109.7px;height:208.7px;background:#e8e8e8;border-radius:0 4px 4px 0;"></div>
<div class="b" style="left:957.7px;top:809.5px;width:2px;height:209.2px;background:#999;"></div>
<div class="b" style="left:995.8px;top:809.5px;width:2px;height:209.2px;background:#999;"></div>
<div class="b" style="left:1034.5px;top:809.5px;width:2px;height:209.2px;background:#999;"></div>
<div class="b" style="left:305px;top:965.6px;width:311.79999999999995px;height:44px;background:#e8e8e8;border-radius:5px;border:1.8px solid #a9a9a9;"></div>
<div class="b" style="left:305px;top:916.8000000000001px;width:432.4px;height:44px;background:#e8e8e8;border-radius:5px;border:1.8px solid #a9a9a9;"></div>
<div class="b" style="left:305px;top:868.0px;width:324px;height:44px;background:#e8e8e8;border-radius:5px;border:1.8px solid #a9a9a9;"></div>
<div class="b" style="left:598.5px;top:819.2px;width:131.5px;height:44px;background:#e8e8e8;border-radius:5px;border:1.8px solid #a9a9a9;"></div>
<div class="b" style="left:305px;top:819.2px;width:282px;height:44px;background:#e8e8e8;border-radius:5px;border:1.8px solid #a9a9a9;"></div>
<div class="b" style="left:289.8px;top:1088.6px;width:780.6px;height:300px;background:#fff;border-radius:6px;border:2px solid #919191;"></div>
<div class="b" style="left:245px;top:1351.4px;width:869.4000000000001px;height:104.59999999999991px;background:#fff;"></div>
<div class="b" style="left:245px;top:1351.4px;width:869.4000000000001px;height:1.8px;background:#eaeaee;"></div>
<div class="b" style="left:259.6px;top:1379.7px;width:59px;height:57px;background:#62b6ea;border-radius:7px;box-shadow:0 1px 4px rgba(90,90,120,.22);"></div>
<div class="b" style="left:1114.5px;top:223px;width:2.1px;height:1233px;background:#000;"></div>
<div class="b" style="left:1116.6px;top:223px;width:903.0px;height:91.69999999999999px;background:#f6f6f8;"></div>
<div class="b" style="left:1708.6px;top:244.2px;width:299.2px;height:56.8px;background:#62b6ea;border-radius:7px;box-shadow:0 2px 6px rgba(90,90,120,.25);"></div>
<div class="b" style="left:1116.6px;top:386.5px;width:900.4000000000001px;height:1.8px;background:#eaeaee;"></div>
<div class="b" style="left:1694.6px;top:314.7px;width:1.5px;height:72px;background:#ececef;"></div>
<div class="b" style="left:1911.7px;top:314.7px;width:1.5px;height:72px;background:#ececef;"></div>
<div class="b" style="left:2015.6px;top:314.7px;width:1.5px;height:72px;background:#ececef;"></div>
<div class="b" style="left:1116.6px;top:490.6px;width:898.8000000000002px;height:102.8px;background:#f6f6f8;"></div>
<div class="b" style="left:1116.6px;top:696.2px;width:898.8000000000002px;height:102.8px;background:#f6f6f8;"></div>
<div class="b" style="left:1116.6px;top:901.8px;width:898.8000000000002px;height:102.8px;background:#f6f6f8;"></div>
<div class="b" style="left:2018px;top:223px;width:2px;height:1233px;background:#f4f3f6;"></div>
<div class="b" style="left:2037.7px;top:519.2px;width:259.3px;height:64.1px;background:#ebebf1;border-radius:9px;"></div>
<div class="b" style="left:2019.6px;top:1351.4px;width:295.2000000000003px;height:1.8px;background:#eaeaee;"></div>
<div class="b" style="left:2089px;top:1376px;width:156px;height:57.6px;background:#62b6ea;border-radius:7px;box-shadow:0 1px 4px rgba(90,90,120,.22);"></div>
<svg class="i" style="left:2281.6px;top:161.4px;" width="17" height="17" viewBox="0 0 17 17" preserveAspectRatio="xMidYMid meet"><path d="M1.2 1.2L15.8 15.8M15.8 1.2L1.2 15.8" stroke="#fff" stroke-width="2.3" stroke-linecap="round" fill="none"/></svg>
<svg class="i" style="left:280.3px;top:268px;" width="31.4" height="24.4" viewBox="0 0 64 50" preserveAspectRatio="none"><rect x="0" y="0" width="64" height="50" rx="6.5" fill="#aea9c6"/><circle cx="19.5" cy="17.8" r="6.3" fill="#352c6c"/><path d="M7.5 38.5a12 10.500 0 0 1 24 0z" fill="#352c6c"/><rect x="39.500" y="13" width="17.500" height="3.800" rx="1.2" fill="#fff"/><rect x="39.500" y="20.400" width="17.500" height="3.800" rx="1.2" fill="#fff"/><rect x="39.500" y="27.800" width="17.500" height="3.800" rx="1.2" fill="#fff"/></svg>
<svg class="i" style="left:280.3px;top:325.8px;" width="28" height="28" viewBox="0 0 512 512" preserveAspectRatio="xMidYMid meet"><path fill="#352c6c" d="M497.390 361.800l-112-48a24 24 0 0 0-28 6.900l-49.600 60.600A370.660 370.660 0 0 1 130.600 204.110l60.600-49.600a23.940 23.940 0 0 0 6.900-28l-48-112A24.160 24.160 0 0 0 122.600.610l-104 24A24 24 0 0 0 0 48c0 256.500 207.900 464 464 464a24 24 0 0 0 23.400-18.600l24-104a24.290 24.290 0 0 0-14.010-27.600z"/></svg>
<svg class="i" style="left:280.3px;top:389.2px;" width="28" height="20.9" viewBox="0 0 56 42" preserveAspectRatio="none"><rect x="0" y="0" width="56" height="42" rx="6.5" fill="#352c6c"/><path d="M-1 8.800L24.500 28.200a5.800 5.800 0 0 0 7 0L57 8.800" stroke="#fff" stroke-width="2.600" fill="none"/></svg>
<svg class="i" style="left:280.3px;top:446px;" width="21" height="27.6" viewBox="0 0 42 56" preserveAspectRatio="none"><rect x="0" y="0" width="42" height="56" rx="5.500" fill="#aea9c6"/><path d="M15.600 56.500V46.500a5.400 5.400 0 0 1 10.800 0V56.500z" fill="#fff"/><rect x="7.2" y="10.4" width="6.600" height="6.600" rx="2.200" fill="#352c6c"/><rect x="17.7" y="10.4" width="6.600" height="6.600" rx="2.200" fill="#352c6c"/><rect x="28.4" y="10.4" width="6.600" height="6.600" rx="2.200" fill="#352c6c"/><rect x="7.2" y="24.6" width="6.600" height="6.600" rx="2.200" fill="#352c6c"/><rect x="17.7" y="24.6" width="6.600" height="6.600" rx="2.200" fill="#352c6c"/><rect x="28.4" y="24.6" width="6.600" height="6.600" rx="2.200" fill="#352c6c"/></svg>
<svg class="i" style="left:280.3px;top:506px;" width="31.5" height="28" viewBox="0 0 64 56" preserveAspectRatio="none"><path d="M8.500 30L32 9L55.500 30V51.500a4.500 4.500 0 0 1-4.500 4.500H13a4.500 4.500 0 0 1-4.500-4.500z" fill="#aea9c6"/><path d="M25.300 56.500V42a2.800 2.800 0 0 1 2.800-2.800h7.800a2.800 2.800 0 0 1 2.800 2.800V56.500z" fill="#fff"/><path d="M3 29.500L32 3.500L61 29.500" stroke="#352c6c" stroke-width="6.200" stroke-linecap="round" stroke-linejoin="round" fill="none"/></svg>
<svg class="i" style="left:280.3px;top:615px;" width="24.6" height="28" viewBox="0 0 50 56" preserveAspectRatio="none"><circle cx="25" cy="13.700" r="13.700" fill="#aea9c6"/><path d="M3.200 56Q0 56 0 52.800C0 42.500 6.500 35.800 15.200 33.600L19.800 51H30.200L34.800 33.600C43.500 35.800 50 42.500 50 52.800Q50 56 46.800 56z" fill="#352c6c"/><path d="M20.800 31.800H29.200L27.400 36.200L30 50.500H20L22.600 36.200z" fill="#352c6c"/></svg>
<svg class="i" style="left:280.3px;top:663.6px;" width="28" height="28" viewBox="0 0 56 56" preserveAspectRatio="xMidYMid meet"><circle cx="28" cy="28" r="19.600" stroke="#aea9c6" stroke-width="6.800" fill="none"/><path d="M28 3.400V12.600M28 43.400V52.600M3.400 28H12.600M43.400 28H52.600" stroke="#352c6c" stroke-width="6.800" stroke-linecap="round" fill="none"/><circle cx="28" cy="28" r="3.300" fill="#352c6c"/></svg>
<svg class="i" style="left:664px;top:615px;" width="25" height="28" viewBox="0 0 50 56" preserveAspectRatio="none"><path d="M10.6 0.300c2.600 3.200 4.300 5.400 4.300 7.400a4.300 4.300 0 0 1-8.600 0c0-2 1.700-4.200 4.300-7.400z" fill="#aea9c6"/><path d="M24.8 0.300c2.600 3.200 4.300 5.400 4.300 7.400a4.300 4.300 0 0 1-8.600 0c0-2 1.700-4.200 4.300-7.400z" fill="#aea9c6"/><path d="M39.0 0.300c2.600 3.200 4.300 5.400 4.300 7.400a4.300 4.300 0 0 1-8.600 0c0-2 1.700-4.200 4.300-7.400z" fill="#aea9c6"/><rect x="7.2" y="15.800" width="6.800" height="9" fill="#352c6c"/><rect x="21.4" y="15.800" width="6.800" height="9" fill="#352c6c"/><rect x="35.6" y="15.800" width="6.800" height="9" fill="#352c6c"/><path d="M5.500 23.700H44.500a5.500 5.500 0 0 1 5.500 5.500V38.800c-4.200 0-4.200 3-8.300 3s-4.200-3-8.400-3-4.100 3-8.300 3-4.200-3-8.300-3-4.200 3-8.400 3S4.200 38.800 0 38.800V29.200a5.500 5.500 0 0 1 5.500-5.500z" fill="#aea9c6"/><path d="M0 42.600c4.200 0 4.200 3 8.300 3s4.200-3 8.400-3 4.100 3 8.300 3 4.200-3 8.300-3 4.200 3 8.400 3 4.100-3 8.300-3V52.500a3.500 3.500 0 0 1-3.500 3.500H3.500A3.500 3.500 0 0 1 0 52.500z" fill="#352c6c"/></svg>
<svg class="i" style="left:664px;top:663.6px;" width="31" height="28" viewBox="0 0 62 56" preserveAspectRatio="none"><circle cx="29" cy="5.300" r="5.300" fill="#aea9c6"/><path d="M27.500 56L30.800 46.200Q31.800 43.600 34.800 43.200L40.200 42.600L47.400 31.600Q48.400 30.400 49.400 31.800L61.800 56z" fill="#aea9c6"/><path d="M4.200 21.800L40.500 40.200" stroke="#aea9c6" stroke-width="3.600" fill="none"/><path d="M1.600 19.500L8.800 11.600Q10 10.500 12 10.500H21.500Q25.500 10.700 28.300 14.500Q31.300 19 34 33.500L27 30L24.500 23L22 27.500L13.500 23L17.500 16.500L14 16L6.500 23.800Q4 25.500 2 23.500Q0.500 21.500 1.600 19.500z" fill="#352c6c"/><path d="M6.500 29.500L21.500 38.500Q23.800 40 23.800 42.500V52.800a3.200 3.200 0 0 1-6.400 0V44.500L11.500 41L6.700 54a3.200 3.200 0 0 1-6-2.200z" fill="#352c6c"/></svg>
<svg class="i" style="left:1052px;top:242px;" width="28" height="28" viewBox="0 0 56 56" preserveAspectRatio="xMidYMid meet"><g transform="rotate(45 28 28)"><path d="M18.200 7.500V-1.200a7.300 7.300 0 0 1 7.300-7.300h5a7.300 7.300 0 0 1 7.300 7.300V7.500z" fill="#352c6c"/><path d="M18.200 10.800H37.800V46.500Q37.800 49.500 36.300 52.200L30 63.200Q28 66 26 63.200L19.700 52.200Q18.200 49.500 18.200 46.500z" fill="#352c6c"/><path d="M23 51.500L28 46.500L33 51.500L28 60.500z" fill="#fff"/></g></svg>
<svg class="i" style="left:314.7px;top:831px;" width="23" height="23" viewBox="0 0 512 512" preserveAspectRatio="xMidYMid meet"><path fill="#35831f" d="M0 252.118V48C0 21.490 21.490 0 48 0h204.118a48 48 0 0 1 33.941 14.059l211.882 211.882c18.745 18.745 18.745 49.137 0 67.882L293.823 497.941c-18.745 18.745-49.137 18.745-67.882 0L14.059 286.059A48 48 0 0 1 0 252.118zM112 64c-26.510 0-48 21.490-48 48s21.490 48 48 48 48-21.490 48-48-21.490-48-48-48z"/></svg>
<svg class="i" style="left:608.3px;top:831px;" width="23" height="23" viewBox="0 0 24 24" preserveAspectRatio="xMidYMid meet"><path d="M2.2 11.3V3.9a1.7 1.7 0 0 1 1.700-1.700h7.400a2 2 0 0 1 1.400.600l8.500 8.500a2.100 2.100 0 0 1 0 3l-6.900 6.900a2.100 2.100 0 0 1-3 0l-8.500-8.500a2 2 0 0 1-.600-1.400z" stroke="#5bc6f3" stroke-width="2.2" stroke-linejoin="round" fill="none"/><circle cx="7.3" cy="7.3" r="1.5" fill="#5bc6f3"/></svg>
<svg class="i" style="left:314.7px;top:879.8px;" width="23" height="23" viewBox="0 0 24 24" preserveAspectRatio="xMidYMid meet"><path d="M2.2 11.3V3.9a1.7 1.7 0 0 1 1.700-1.700h7.400a2 2 0 0 1 1.400.600l8.500 8.500a2.100 2.100 0 0 1 0 3l-6.900 6.900a2.100 2.100 0 0 1-3 0l-8.500-8.500a2 2 0 0 1-.600-1.400z" stroke="#2f2b08" stroke-width="2.2" stroke-linejoin="round" fill="none"/><circle cx="7.3" cy="7.3" r="1.5" fill="#2f2b08"/></svg>
<svg class="i" style="left:314.7px;top:928.6px;" width="23" height="23" viewBox="0 0 512 512" preserveAspectRatio="xMidYMid meet"><path fill="#c9fbc9" d="M0 252.118V48C0 21.490 21.490 0 48 0h204.118a48 48 0 0 1 33.941 14.059l211.882 211.882c18.745 18.745 18.745 49.137 0 67.882L293.823 497.941c-18.745 18.745-49.137 18.745-67.882 0L14.059 286.059A48 48 0 0 1 0 252.118zM112 64c-26.510 0-48 21.490-48 48s21.490 48 48 48 48-21.490 48-48-21.490-48-48-48z"/></svg>
<svg class="i" style="left:314.7px;top:977.4px;" width="23" height="23" viewBox="0 0 512 512" preserveAspectRatio="xMidYMid meet"><path fill="#4162ef" d="M0 252.118V48C0 21.490 21.490 0 48 0h204.118a48 48 0 0 1 33.941 14.059l211.882 211.882c18.745 18.745 18.745 49.137 0 67.882L293.823 497.941c-18.745 18.745-49.137 18.745-67.882 0L14.059 286.059A48 48 0 0 1 0 252.118zM112 64c-26.510 0-48 21.490-48 48s21.490 48 48 48 48-21.490 48-48-21.490-48-48-48z"/></svg>
<svg class="i" style="left:968.5px;top:909.8px;" width="19" height="10.2" viewBox="0 0 19 10.2" preserveAspectRatio="none"><path d="M1.2 1.2L9.5 8.8L17.8 1.2" stroke="#352c6c" stroke-width="2.1" stroke-linecap="round" stroke-linejoin="round" fill="none"/></svg>
<svg class="i" style="left:1005px;top:902.5px;" width="22.6" height="22.4" viewBox="0 0 22.6 22.4" preserveAspectRatio="xMidYMid meet"><circle cx="9.6" cy="9.6" r="8.4" stroke="#352c6c" stroke-width="2.2" fill="none"/><path d="M15.8 15.8L21.6 21.4" stroke="#352c6c" stroke-width="2.4" stroke-linecap="round"/></svg>
<svg class="i" style="left:1046px;top:904.8px;" width="17.6" height="17.8" viewBox="0 0 18 18" preserveAspectRatio="xMidYMid meet"><path d="M9 1V17M1 9H17" stroke="#352c6c" stroke-width="2.1" stroke-linecap="round" fill="none"/></svg>
<svg class="i" style="left:276.8px;top:1397.4px;" width="22" height="18.8" viewBox="0 0 22 18.8" preserveAspectRatio="none"><rect x="0" y="0" width="22" height="3.6" rx="1.6" fill="#fff"/><rect x="0" y="7.6" width="22" height="3.6" rx="1.6" fill="#fff"/><rect x="0" y="15.2" width="22" height="3.6" rx="1.6" fill="#fff"/></svg>
<svg class="i" style="left:1728.5px;top:258.8px;" width="24.8" height="24.8" viewBox="0 0 25 25" preserveAspectRatio="xMidYMid meet"><circle cx="12.5" cy="12.5" r="12.5" fill="#fff"/><path d="M12.5 7.9V17.1M7.9 12.5H17.1" stroke="#62b6ea" stroke-width="2" stroke-linecap="round" fill="none"/></svg>
<svg class="i" style="left:2106.1px;top:1395.6px;" width="16" height="16" viewBox="0 0 17 17" preserveAspectRatio="xMidYMid meet"><path d="M1.2 1.2L15.8 15.8M15.8 1.2L1.2 15.8" stroke="#fff" stroke-width="2.3" stroke-linecap="round" fill="none"/></svg>
<svg class="i" style="left:2057px;top:262px;" width="18" height="21" viewBox="0 0 36 42" preserveAspectRatio="none"><rect x="7.500" y="0" width="5" height="9" rx="1.500" fill="#3c3c3c"/><rect x="23.500" y="0" width="5" height="9" rx="1.500" fill="#3c3c3c"/><path d="M4 5H32a4 4 0 0 1 4 4V13.500H0V9a4 4 0 0 1 4-4z" fill="#3c3c3c"/><path d="M0 16.500H36V38a4 4 0 0 1-4 4H4a4 4 0 0 1-4-4z" fill="#3c3c3c"/><rect x="5.5" y="21" width="5" height="5" rx=".8" fill="#fff"/><rect x="15.5" y="21" width="5" height="5" rx=".8" fill="#fff"/><rect x="25.5" y="21" width="5" height="5" rx=".8" fill="#fff"/><rect x="5.5" y="30.5" width="5" height="5" rx=".8" fill="#fff"/><rect x="15.5" y="30.5" width="5" height="5" rx=".8" fill="#fff"/><rect x="25.5" y="30.5" width="5" height="5" rx=".8" fill="#fff"/></svg>
<svg class="i" style="left:2057px;top:333px;" width="18.2" height="18.4" viewBox="0 0 36 36" preserveAspectRatio="none"><rect x="0" y="0" width="36" height="36" rx="5.500" fill="#3c3c3c"/><rect x="6" y="7.8" width="4.500" height="4.200" rx=".8" fill="#fff"/><rect x="13.500" y="7.8" width="17" height="4.200" rx=".8" fill="#fff"/><rect x="6" y="15.9" width="4.500" height="4.200" rx=".8" fill="#fff"/><rect x="13.500" y="15.9" width="17" height="4.200" rx=".8" fill="#fff"/><rect x="6" y="24" width="4.500" height="4.200" rx=".8" fill="#fff"/><rect x="13.500" y="24" width="17" height="4.200" rx=".8" fill="#fff"/></svg>
<svg class="i" style="left:2057px;top:403.4px;" width="20.8" height="17" viewBox="0 0 42 34" preserveAspectRatio="none"><rect x="0" y="0" width="8" height="7" rx="1.6" fill="#3c3c3c"/><rect x="13.5" y="1" width="28.5" height="5" rx="2.4" fill="#3c3c3c"/><rect x="0" y="13.5" width="8" height="7" rx="1.6" fill="#3c3c3c"/><rect x="13.5" y="14.5" width="28.5" height="5" rx="2.4" fill="#3c3c3c"/><rect x="0" y="27" width="8" height="7" rx="1.6" fill="#3c3c3c"/><rect x="13.5" y="28" width="28.5" height="5" rx="2.4" fill="#3c3c3c"/></svg>
<svg class="i" style="left:2057px;top:472.4px;" width="20.8" height="18.4" viewBox="0 0 42 37" preserveAspectRatio="none"><path d="M0 5a5 5 0 0 1 5-5H14.500Q16.500 0 18 1.500L21.500 5H37a5 5 0 0 1 5 5V32a5 5 0 0 1-5 5H5a5 5 0 0 1-5-5z" fill="#3c3c3c"/></svg>
<svg class="i" style="left:2056.6px;top:541.1px;" width="18.5" height="20.7" viewBox="0 0 37 41.4" preserveAspectRatio="none"><path d="M34.7 23L20.9 34.86A11.5 11.5 0 0 1 5.9 17.4L20.8 4.6A7.6 7.6 0 0 1 30.7 16.1L17.4 27.5A3.77 3.77 0 0 1 12.48 21.78L23.7 12.1" stroke="#352c6c" stroke-width="4" stroke-linecap="round" stroke-linejoin="round" fill="none"/></svg>
<svg class="i" style="left:2056.8px;top:612px;" width="18.3" height="18.1" viewBox="0 0 36.6 36.2" preserveAspectRatio="none"><path d="M7.4 17.8L28.8 7.2M7.4 17.8L28.8 28.6" stroke="#3c3c3c" stroke-width="3.9" fill="none"/><circle cx="7.5" cy="17.8" r="5" stroke="#3c3c3c" stroke-width="5" fill="#fff"/><circle cx="28.9" cy="7.5" r="5" stroke="#3c3c3c" stroke-width="5" fill="#fff"/><circle cx="28.9" cy="28.7" r="5" stroke="#3c3c3c" stroke-width="5" fill="#fff"/></svg>
<svg class="i" style="left:2057px;top:682.6px;" width="20.8" height="15.8" viewBox="0 0 42 32" preserveAspectRatio="none"><rect x="0" y="0" width="42" height="32" rx="5" fill="#3c3c3c"/><path d="M-1 6.500L18.200 21.200a4.600 4.600 0 0 0 5.600 0L43 6.500" stroke="#fff" stroke-width="2.400" fill="none"/></svg>
<svg class="i" style="left:2056.7px;top:768.1px;" width="21" height="20.8" viewBox="0 0 42 41.6" preserveAspectRatio="none"><path d="M9.23 6.53A18.5 18.5 0 1 1 9.11 34.97" stroke="#3c3c3c" stroke-width="4.7" stroke-linecap="round" fill="none"/><path d="M0.4 3.6V15.6H12.6z" fill="#3c3c3c" stroke="#3c3c3c" stroke-width="1" stroke-linejoin="round"/><path d="M21 11.3V20.4L26.8 26.4" stroke="#3c3c3c" stroke-width="4" stroke-linecap="round" stroke-linejoin="round" fill="none"/></svg>
<svg class="i" style="left:1925.5px;top:425.3px;" width="34.5" height="24" viewBox="0 32 640 448" preserveAspectRatio="none"><path fill="#62b6ea" d="M537.6 226.6c4.1-10.7 6.4-22.4 6.4-34.6 0-53-43-96-96-96-19.7 0-38.1 6-53.3 16.2C367 64.2 315.3 32 256 32c-88.4 0-160 71.6-160 160 0 2.700.1 5.400.2 8.100C40.2 219.8 0 273.200 0 336c0 79.5 64.5 144 144 144h368c70.7 0 128-57.3 128-128 0-61.9-44-113.6-102.4-125.400z"/><path d="M318 214V408M244 336L318 410L392 336" stroke="#fff" stroke-width="40" stroke-linecap="round" stroke-linejoin="round" fill="none"/></svg>
<svg class="i" style="left:1970.5px;top:423.3px;" width="28.2" height="28.2" viewBox="0 0 28 28" preserveAspectRatio="xMidYMid meet"><circle cx="14" cy="14" r="14" fill="#62b6ea"/><path d="M9.9 9.9L18.1 18.1M18.1 9.9L9.9 18.1" stroke="#fff" stroke-width="2.8" stroke-linecap="round" fill="none"/></svg>
<svg class="i" style="left:1925.5px;top:528.1px;" width="34.5" height="24" viewBox="0 32 640 448" preserveAspectRatio="none"><path fill="#62b6ea" d="M537.6 226.6c4.1-10.7 6.4-22.4 6.4-34.6 0-53-43-96-96-96-19.7 0-38.1 6-53.3 16.2C367 64.2 315.3 32 256 32c-88.4 0-160 71.6-160 160 0 2.700.1 5.400.2 8.100C40.2 219.8 0 273.200 0 336c0 79.5 64.5 144 144 144h368c70.7 0 128-57.3 128-128 0-61.9-44-113.6-102.4-125.400z"/><path d="M318 214V408M244 336L318 410L392 336" stroke="#fff" stroke-width="40" stroke-linecap="round" stroke-linejoin="round" fill="none"/></svg>
<svg class="i" style="left:1970.5px;top:526.1px;" width="28.2" height="28.2" viewBox="0 0 28 28" preserveAspectRatio="xMidYMid meet"><circle cx="14" cy="14" r="14" fill="#62b6ea"/><path d="M9.9 9.9L18.1 18.1M18.1 9.9L9.9 18.1" stroke="#fff" stroke-width="2.8" stroke-linecap="round" fill="none"/></svg>
<svg class="i" style="left:1925.5px;top:630.9px;" width="34.5" height="24" viewBox="0 32 640 448" preserveAspectRatio="none"><path fill="#62b6ea" d="M537.6 226.6c4.1-10.7 6.4-22.4 6.4-34.6 0-53-43-96-96-96-19.7 0-38.1 6-53.3 16.2C367 64.2 315.3 32 256 32c-88.4 0-160 71.6-160 160 0 2.700.1 5.400.2 8.100C40.2 219.8 0 273.200 0 336c0 79.5 64.5 144 144 144h368c70.7 0 128-57.3 128-128 0-61.9-44-113.6-102.4-125.400z"/><path d="M318 214V408M244 336L318 410L392 336" stroke="#fff" stroke-width="40" stroke-linecap="round" stroke-linejoin="round" fill="none"/></svg>
<svg class="i" style="left:1970.5px;top:628.9px;" width="28.2" height="28.2" viewBox="0 0 28 28" preserveAspectRatio="xMidYMid meet"><circle cx="14" cy="14" r="14" fill="#62b6ea"/><path d="M9.9 9.9L18.1 18.1M18.1 9.9L9.9 18.1" stroke="#fff" stroke-width="2.8" stroke-linecap="round" fill="none"/></svg>
<svg class="i" style="left:1925.5px;top:733.7px;" width="34.5" height="24" viewBox="0 32 640 448" preserveAspectRatio="none"><path fill="#62b6ea" d="M537.6 226.6c4.1-10.7 6.4-22.4 6.4-34.6 0-53-43-96-96-96-19.7 0-38.1 6-53.3 16.2C367 64.2 315.3 32 256 32c-88.4 0-160 71.6-160 160 0 2.700.1 5.400.2 8.100C40.2 219.8 0 273.200 0 336c0 79.5 64.5 144 144 144h368c70.7 0 128-57.3 128-128 0-61.9-44-113.6-102.4-125.400z"/><path d="M318 214V408M244 336L318 410L392 336" stroke="#fff" stroke-width="40" stroke-linecap="round" stroke-linejoin="round" fill="none"/></svg>
<svg class="i" style="left:1970.5px;top:731.7px;" width="28.2" height="28.2" viewBox="0 0 28 28" preserveAspectRatio="xMidYMid meet"><circle cx="14" cy="14" r="14" fill="#e8614a"/><path d="M9.9 9.9L18.1 18.1M18.1 9.9L9.9 18.1" stroke="#fff" stroke-width="2.8" stroke-linecap="round" fill="none"/></svg>
<svg class="i" style="left:1925.5px;top:836.5px;" width="34.5" height="24" viewBox="0 32 640 448" preserveAspectRatio="none"><path fill="#62b6ea" d="M537.6 226.6c4.1-10.7 6.4-22.4 6.4-34.6 0-53-43-96-96-96-19.7 0-38.1 6-53.3 16.2C367 64.2 315.3 32 256 32c-88.4 0-160 71.6-160 160 0 2.700.1 5.400.2 8.100C40.2 219.8 0 273.200 0 336c0 79.5 64.5 144 144 144h368c70.7 0 128-57.3 128-128 0-61.9-44-113.6-102.4-125.400z"/><path d="M318 214V408M244 336L318 410L392 336" stroke="#fff" stroke-width="40" stroke-linecap="round" stroke-linejoin="round" fill="none"/></svg>
<svg class="i" style="left:1970.5px;top:834.5px;" width="28.2" height="28.2" viewBox="0 0 28 28" preserveAspectRatio="xMidYMid meet"><circle cx="14" cy="14" r="14" fill="#e8614a"/><path d="M9.9 9.9L18.1 18.1M18.1 9.9L9.9 18.1" stroke="#fff" stroke-width="2.8" stroke-linecap="round" fill="none"/></svg>
<svg class="i" style="left:1925.5px;top:939.3px;" width="34.5" height="24" viewBox="0 32 640 448" preserveAspectRatio="none"><path fill="#62b6ea" d="M537.6 226.6c4.1-10.7 6.4-22.4 6.4-34.6 0-53-43-96-96-96-19.7 0-38.1 6-53.3 16.2C367 64.2 315.3 32 256 32c-88.4 0-160 71.6-160 160 0 2.700.1 5.400.2 8.100C40.2 219.8 0 273.200 0 336c0 79.5 64.5 144 144 144h368c70.7 0 128-57.3 128-128 0-61.9-44-113.6-102.4-125.400z"/><path d="M318 214V408M244 336L318 410L392 336" stroke="#fff" stroke-width="40" stroke-linecap="round" stroke-linejoin="round" fill="none"/></svg>
<svg class="i" style="left:1970.5px;top:937.3px;" width="28.2" height="28.2" viewBox="0 0 28 28" preserveAspectRatio="xMidYMid meet"><circle cx="14" cy="14" r="14" fill="#e8614a"/><path d="M9.9 9.9L18.1 18.1M18.1 9.9L9.9 18.1" stroke="#fff" stroke-width="2.8" stroke-linecap="round" fill="none"/></svg>
<div class="t" style="left:253.7px;top:160.7px;font-size:27.5px;line-height:27.5px;transform:scaleX(1.0395);font-weight:700;color:#fff;">Detail kontaktu</div>
<div class="t" style="left:329.2px;top:261.8px;font-size:35px;line-height:35px;transform:scaleX(1.0345);font-weight:700;color:#3a3a3a;">Ing. Mirek Lhotecký</div>
<div class="t" style="left:330.3px;top:325.4px;font-size:28.6px;line-height:28.6px;transform:scaleX(1.0403);-webkit-text-stroke:0.3px;">+420 722 924 362</div>
<div class="t" style="left:330.2px;top:385.8px;font-size:28.6px;line-height:28.6px;transform:scaleX(1.0823);-webkit-text-stroke:0.3px;">lhoteckymirek@seznam.cz</div>
<div class="t" style="left:329.4px;top:445.8px;font-size:28.6px;line-height:28.6px;letter-spacing:-0.329px;transform:scaleX(0.9400);-webkit-text-stroke:0.3px;">FFS s.r.o.</div>
<div class="t" style="left:329.2px;top:505.8px;font-size:28.6px;line-height:28.6px;transform:scaleX(1.0618);-webkit-text-stroke:0.3px;">Praha</div>
<div class="t" style="left:331.3px;top:614.6px;font-size:28.6px;line-height:28.6px;transform:scaleX(1.0567);-webkit-text-stroke:0.3px;">Jan Novák</div>
<div class="t" style="left:712.6px;top:614.6px;font-size:28.6px;line-height:28.6px;transform:scaleX(0.9745);-webkit-text-stroke:0.3px;">22.03.1980</div>
<div class="t" style="left:329.1px;top:663.8px;font-size:28.6px;line-height:28.6px;transform:scaleX(1.0924);-webkit-text-stroke:0.3px;">Podnikatel</div>
<div class="t" style="left:711.4px;top:663.8px;font-size:28.6px;line-height:28.6px;transform:scaleX(1.0858);-webkit-text-stroke:0.3px;">Ředitel</div>
<div class="t" style="left:288.8px;top:770.3px;font-size:24.5px;line-height:24.5px;transform:scaleX(1.0326);-webkit-text-stroke:0.3px;color:#222;">Štítky</div>
<div class="t" style="left:287.5px;top:1050.5px;font-size:24.5px;line-height:24.5px;letter-spacing:0.237px;transform:scaleX(1.1300);-webkit-text-stroke:0.3px;color:#222;">Komentáře</div>
<div class="t" style="left:348.7px;top:825.5px;font-size:27px;line-height:27px;letter-spacing:1.204px;transform:scaleX(1.1300);-webkit-text-stroke:0.3px;">Kampaň_léto</div>
<div class="t" style="left:556.0px;top:825.5px;font-size:27px;line-height:27px;-webkit-text-stroke:0.3px;">×</div>
<div class="t" style="left:644.0px;top:825.5px;font-size:27px;line-height:27px;transform:scaleX(0.9527);-webkit-text-stroke:0.3px;">VIP</div>
<div class="t" style="left:699.0px;top:825.5px;font-size:27px;line-height:27px;-webkit-text-stroke:0.3px;">×</div>
<div class="t" style="left:348.7px;top:874.3px;font-size:27px;line-height:27px;letter-spacing:0.864px;transform:scaleX(1.1300);-webkit-text-stroke:0.3px;">Kampaň_březen</div>
<div class="t" style="left:598.4px;top:874.3px;font-size:27px;line-height:27px;-webkit-text-stroke:0.3px;">×</div>
<div class="t" style="left:348.7px;top:923.1px;font-size:27px;line-height:27px;letter-spacing:0.464px;transform:scaleX(1.1300);-webkit-text-stroke:0.3px;">Potřebuje nabídku 09/25</div>
<div class="t" style="left:706.6px;top:923.1px;font-size:27px;line-height:27px;-webkit-text-stroke:0.3px;">×</div>
<div class="t" style="left:348.7px;top:971.9px;font-size:27px;line-height:27px;letter-spacing:1.299px;transform:scaleX(1.1300);-webkit-text-stroke:0.3px;">Kampaň_09/25</div>
<div class="t" style="left:585.6px;top:971.9px;font-size:27px;line-height:27px;-webkit-text-stroke:0.3px;">×</div>
<div class="t" style="left:298.9px;top:1101.9px;font-size:23px;line-height:23px;transform:scaleX(1.0565);-webkit-text-stroke:0.3px;color:#000;">Nový klient, 2025</div>
<div class="t" style="left:298.9px;top:1169.9px;font-size:23px;line-height:23px;transform:scaleX(1.1286);-webkit-text-stroke:0.3px;color:#000;">Potenciál pro dlouhodobou spolupráci</div>
<div class="t" style="left:300.0px;top:1237.9px;font-size:23px;line-height:23px;transform:scaleX(1.0404);-webkit-text-stroke:0.3px;color:#000;">VIP kontakt</div>
<div class="t" style="left:298.9px;top:1305.9px;font-size:23px;line-height:23px;transform:scaleX(1.0785);-webkit-text-stroke:0.3px;color:#000;">Preferuje osobní schůzky.</div>
<div class="t" style="left:1762.2px;top:260.6px;font-size:23px;line-height:23px;transform:scaleX(1.0145);font-weight:700;color:#fff;">VLOŽIT DOKUMENT</div>
<div class="t" style="left:2139.6px;top:1393.1px;font-size:23px;line-height:23px;transform:scaleX(1.0333);font-weight:700;color:#fff;">ZAVŘÍT</div>
<div class="t" style="left:1134.4px;top:339.2px;font-size:22.6px;line-height:22.6px;letter-spacing:0.135px;transform:scaleX(1.1300);-webkit-text-stroke:0.3px;color:#222;">Jméno</div>
<div class="t" style="left:1712.0px;top:339.5px;font-size:22.6px;line-height:22.6px;letter-spacing:0.103px;transform:scaleX(1.1300);-webkit-text-stroke:0.3px;color:#222;">Vytvořeno</div>
<div class="t" style="left:1132.4px;top:428.5px;font-size:22.6px;line-height:22.6px;letter-spacing:0.256px;transform:scaleX(1.1300);-webkit-text-stroke:0.3px;color:#222;">zaverecna_prace (84).pdf</div>
<div class="t" style="left:1712.0px;top:428.5px;font-size:22.6px;line-height:22.6px;transform:scaleX(0.9719);-webkit-text-stroke:0.3px;color:#222;">31. 03. 2025 09:...</div>
<div class="t" style="left:1132.4px;top:531.3px;font-size:22.6px;line-height:22.6px;transform:scaleX(1.0656);-webkit-text-stroke:0.3px;color:#222;">VZaZ - Kopie listu Kopie listu Tab. VZaZ mínus 0 ...</div>
<div class="t" style="left:1712.0px;top:531.3px;font-size:22.6px;line-height:22.6px;transform:scaleX(0.9719);-webkit-text-stroke:0.3px;color:#222;">31. 03. 2025 09:...</div>
<div class="t" style="left:1131.3px;top:634.1px;font-size:22.6px;line-height:22.6px;transform:scaleX(1.1183);-webkit-text-stroke:0.3px;color:#222;">Daňová evidence - evidence příjmů a výdajů (1...</div>
<div class="t" style="left:1712.0px;top:634.1px;font-size:22.6px;line-height:22.6px;transform:scaleX(0.9719);-webkit-text-stroke:0.3px;color:#222;">31. 03. 2025 09:...</div>
<div class="t" style="left:1131.3px;top:736.9px;font-size:22.6px;line-height:22.6px;transform:scaleX(1.0524);-webkit-text-stroke:0.3px;color:#222;">PrezentaceBS.key</div>
<div class="t" style="left:1712.0px;top:736.9px;font-size:22.6px;line-height:22.6px;transform:scaleX(0.9841);-webkit-text-stroke:0.3px;color:#222;">04. 05. 2025 18:...</div>
<div class="t" style="left:1131.3px;top:839.7px;font-size:22.6px;line-height:22.6px;transform:scaleX(1.1135);-webkit-text-stroke:0.3px;color:#222;">Potvrzení a připomínky klientům.gif</div>
<div class="t" style="left:1711.0px;top:839.7px;font-size:22.6px;line-height:22.6px;-webkit-text-stroke:0.3px;color:#222;">29. 07. 2025 22:...</div>
<div class="t" style="left:1131.4px;top:942.5px;font-size:22.6px;line-height:22.6px;transform:scaleX(1.0097);-webkit-text-stroke:0.3px;color:#222;">14401011598406.pdf</div>
<div class="t" style="left:1711.0px;top:942.5px;font-size:22.6px;line-height:22.6px;-webkit-text-stroke:0.3px;color:#222;">29. 07. 2025 22:...</div>
<div class="t" style="left:2094.2px;top:260.8px;font-size:22.8px;line-height:22.8px;transform:scaleX(1.0769);-webkit-text-stroke:0.3px;color:#2a2a2a;">Aktivity</div>
<div class="t" style="left:2094.2px;top:330.7px;font-size:22.8px;line-height:22.8px;transform:scaleX(1.0975);-webkit-text-stroke:0.3px;color:#2a2a2a;">Vlastní pole</div>
<div class="t" style="left:2093.2px;top:399.7px;font-size:22.8px;line-height:22.8px;transform:scaleX(1.0282);-webkit-text-stroke:0.3px;color:#2a2a2a;">Úkoly</div>
<div class="t" style="left:2093.1px;top:469.5px;font-size:22.8px;line-height:22.8px;transform:scaleX(1.0592);-webkit-text-stroke:0.3px;color:#2a2a2a;">Projekty</div>
<div class="t" style="left:2093.1px;top:539.7px;font-size:22.8px;line-height:22.8px;transform:scaleX(1.1140);-webkit-text-stroke:0.3px;color:#2a2a2a;">Dokumenty</div>
<div class="t" style="left:2093.2px;top:609.3px;font-size:22.8px;line-height:22.8px;transform:scaleX(1.0263);-webkit-text-stroke:0.3px;color:#2a2a2a;">Sdílení</div>
<div class="t" style="left:2093.1px;top:679.1px;font-size:22.8px;line-height:22.8px;transform:scaleX(1.1297);-webkit-text-stroke:0.3px;color:#2a2a2a;">E-maily</div>
<div class="t" style="left:2093.1px;top:748.6px;font-size:22.8px;line-height:22.8px;transform:scaleX(1.1092);-webkit-text-stroke:0.3px;color:#2a2a2a;">Operace s</div>
<div class="t" style="left:2093.1px;top:784.9px;font-size:22.8px;line-height:22.8px;letter-spacing:0.277px;transform:scaleX(1.1300);-webkit-text-stroke:0.3px;color:#2a2a2a;">kontaktem</div>
</div>
</body></html>
